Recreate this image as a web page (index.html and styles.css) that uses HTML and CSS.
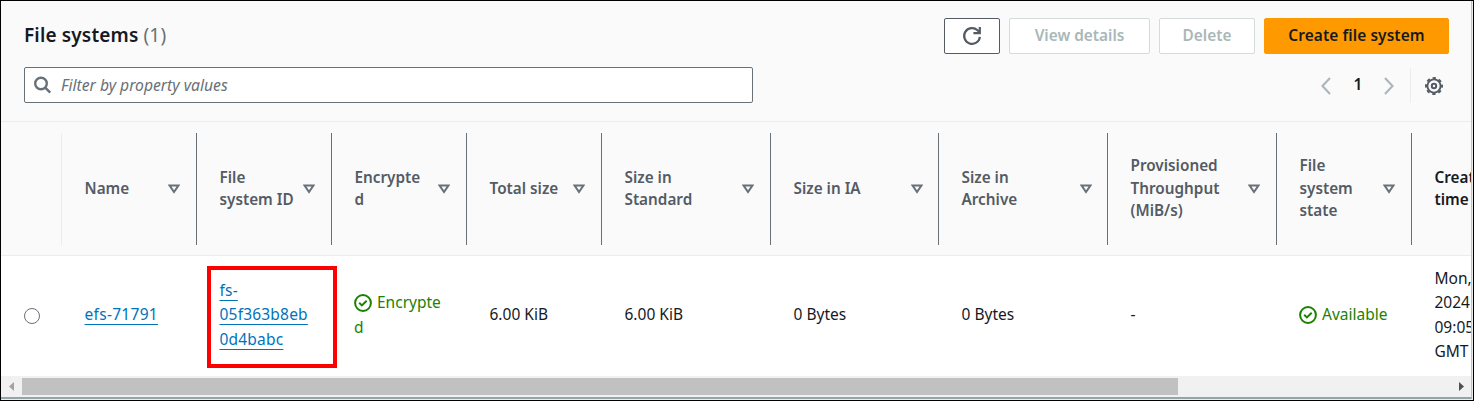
FILE: index.html
```html
<!DOCTYPE html>
<html lang="en">
<head>
<meta charset="utf-8">
<title>File systems</title>
<link rel="stylesheet" href="styles.css">
</head>
<body>
<svg width="0" height="0" class="defs" aria-hidden="true">
  <symbol id="sort" viewBox="0 0 12 10"><path d="M1.6 1.5h8.8L6 8z" fill="none" stroke="#687078" stroke-width="2"/></symbol>
  <symbol id="ok" viewBox="0 0 18 18"><circle cx="9" cy="9" r="7.9" fill="none" stroke="#1d8102" stroke-width="2"/><path d="M5.2 8.8l2.7 2.6 4.8-4.7" fill="none" stroke="#1d8102" stroke-width="2"/></symbol>
</svg>
<main class="frame">
  <section class="panel">
    <header class="header">
      <div class="row">
        <h1 class="title">File systems <span class="count">(1)</span></h1>
        <div class="actions">
          <button class="btn refresh" aria-label="Refresh"><svg width="20" height="20" viewBox="0 0 20 20" fill="none" stroke="#545b64" stroke-width="2.2"><path d="M17.9 10.9a7.9 7.9 0 1 1-2.4-6.6l2 2"/><path d="M17.8 1v6.2h-6.4"/></svg></button>
          <button class="btn view off">View details</button>
          <button class="btn delete off">Delete</button>
          <button class="btn create">Create file system</button>
        </div>
      </div>
      <div class="row tools">
        <div class="search">
          <svg width="18" height="18" viewBox="0 0 18 18" fill="none" stroke="#687078" stroke-width="2.4"><circle cx="7" cy="7.5" r="5.8"/><path d="M11.2 11.7l5 5"/></svg>
          <span class="placeholder">Filter by property values</span>
        </div>
        <div class="pager">
          <svg class="arrow" width="10" height="18" viewBox="0 0 10 18" fill="none" stroke="#aab7b8" stroke-width="2.1"><path d="M9 1L1.5 9 9 17"/></svg>
          <b class="page">1</b>
          <svg class="arrow" width="10" height="18" viewBox="0 0 10 18" fill="none" stroke="#aab7b8" stroke-width="2.1"><path d="M1 1l7.5 8L1 17"/></svg>
          <span class="divider"></span>
          <svg class="gear" width="18" height="18" viewBox="0 0 18 18" fill="none" stroke="#545b64"><circle cx="9" cy="9" r="8" stroke-width="2" stroke-dasharray="3.3 2.983" stroke-dashoffset="1.65"/><circle cx="9" cy="9" r="6.6" stroke-width="1.9"/><circle cx="9" cy="9" r="2.2" stroke-width="2"/></svg>
        </div>
      </div>
    </header>
    <div class="grid head">
      <div class="th first"></div>
      <div class="th"><span>Name</span><svg class="sort"><use href="#sort"/></svg></div>
      <div class="th"><span>File<br>system ID</span><svg class="sort"><use href="#sort"/></svg></div>
      <div class="th"><span>Encrypte<br>d</span><svg class="sort"><use href="#sort"/></svg></div>
      <div class="th"><span>Total size</span><svg class="sort"><use href="#sort"/></svg></div>
      <div class="th"><span>Size in<br>Standard</span><svg class="sort"><use href="#sort"/></svg></div>
      <div class="th tight"><span>Size in IA</span><svg class="sort"><use href="#sort"/></svg></div>
      <div class="th tight"><span>Size in<br>Archive</span><svg class="sort"><use href="#sort"/></svg></div>
      <div class="th"><span>Provisioned<br>Throughput<br>(MiB/s)</span><svg class="sort"><use href="#sort"/></svg></div>
      <div class="th"><span>File<br>system<br>state</span><svg class="sort"><use href="#sort"/></svg></div>
      <div class="th last"><span>Creat<br>time</span></div>
    </div>
    <div class="grid body">
      <div class="td pick"><span class="radio"></span></div>
      <div class="td"><a class="link name">efs-71791</a></div>
      <div class="td id"><span><a class="link">fs-<br>05f363b8eb<br>0d4babc</a></span><i class="highlight"></i></div>
      <div class="td state"><span class="status"><svg class="ok"><use href="#ok"/></svg>Encrypte<br>d</span></div>
      <div class="td">6.00 KiB</div>
      <div class="td">6.00 KiB</div>
      <div class="td">0 Bytes</div>
      <div class="td">0 Bytes</div>
      <div class="td">-</div>
      <div class="td state"><span class="status"><svg class="ok"><use href="#ok"/></svg>Available</span></div>
      <div class="td time">Mon,<br>2024<br>09:05<br>GMT</div>
    </div>
    <div class="scroll">
      <svg width="5" height="9" viewBox="0 0 5 9"><path d="M5 0v9L0 4.5z" fill="#a3a3a3"/></svg>
      <span class="thumb"></span>
      <svg width="5" height="9" viewBox="0 0 5 9"><path d="M0 0v9l5-4.5z" fill="#505050"/></svg>
    </div>
  </section>
</main>
</body>
</html>
```
FILE: styles.css
```css
* { box-sizing: border-box; }
body { margin: 0; font: 15.5px/24.5px "Noto Sans", sans-serif; color: #16191f; background: #fff; }
.defs { display: block; position: absolute; }
.frame { width: 1474px; height: 401px; border: 1px solid #000; overflow: hidden; background: #eaeded; }
.panel { width: 1471px; height: 398px; border-right: 1px solid #bcc4c5; border-bottom: 2px solid #95a5a6; background: #f1f1f1; overflow: hidden; }
.header { height: 121px; padding: 17px 22px 0 23px; background: #fafafa; border-bottom: 1px solid #eaeded; }
.row { display: flex; align-items: center; justify-content: space-between; height: 36px; }
.title { margin: 0; padding-bottom: 2px; font-size: 19px; font-weight: 650; letter-spacing: 0.15px; white-space: nowrap; }
.count { font-weight: 400; color: #687078; }
.actions { display: flex; gap: 9px; }
.btn { height: 36px; padding: 0; border: 1px solid #545b64; border-radius: 2px; background: #fff; font: 650 15.4px/32px "Noto Sans", sans-serif; color: #16191f; white-space: nowrap; display: flex; align-items: center; justify-content: center; }
.refresh { width: 56px; }
.view { width: 141px; }
.delete { width: 96px; }
.create { width: 185px; letter-spacing: 0.1px; background: #ff9900; border-color: #ff9900; }
.off { color: #aab7b8; border-color: #d5dbdb; }
.tools { margin-top: 13px; }
.search { width: 729px; height: 36px; padding-left: 9px; display: flex; align-items: center; gap: 9px; border: 1px solid #687078; border-radius: 2px; background: #fff; }
.placeholder { font-size: 15.7px; font-style: italic; color: #687078; }
.pager { display: flex; align-items: center; height: 36px; padding-right: 6px; }
.page { width: 53px; padding: 0 0 2px 1px; text-align: center; font-weight: 650; }
.divider { width: 1px; height: 35px; margin: 0 14px 0 16px; background: #eaeded; }
.gear, .arrow { margin-top: 2px; }
.grid { display: grid; width: 1600px; grid-template-columns: 61px 135px 135px 135px 135px 169px 168px 169px 169px 135px 189px; }
.head { height: 134px; padding: 11px 0; background: #fafafa; border-bottom: 1px solid #eaeded; }
.th { height: 112px; padding: 0 16px 0 22.5px; display: flex; align-items: center; justify-content: space-between; border-right: 1px solid #687078; font-weight: 650; font-size: 15.3px; line-height: 22.5px; color: #545b64; white-space: nowrap; }
.th span { padding-bottom: 2px; }
.tight { padding-right: 15px; }
.first { border-color: #eaeded; }
.last { color: #16191f; }
.sort { width: 12px; height: 10px; flex: none; }
.body { height: 120px; background: #fff; }
.td { padding: 0 0 3px 22.5px; display: flex; align-items: center; white-space: nowrap; }
.state { padding-left: 22px; }
.pick { padding: 0 0 0 23px; }
.radio { width: 16px; height: 16px; border: 1px solid #687078; border-radius: 50%; }
.link { letter-spacing: 0.2px; color: #0073bb; text-decoration: underline; text-decoration-thickness: 1px; text-underline-offset: 4px; text-decoration-skip-ink: none; }
.name { letter-spacing: 0.3px; }
.id { position: relative; }
.highlight { position: absolute; left: 10px; top: 10px; width: 130px; height: 102px; border: 4px solid #f00; }
.status { color: #1d8102; }
.ok { width: 18px; height: 18px; margin-right: 5px; vertical-align: -4px; }
.scroll { height: 20px; padding: 0 7px 0 8px; display: flex; align-items: center; background: #f1f1f1; }
.thumb { width: 1156px; height: 17px; margin: 0 auto 0 8px; background: #c1c1c1; }
```
